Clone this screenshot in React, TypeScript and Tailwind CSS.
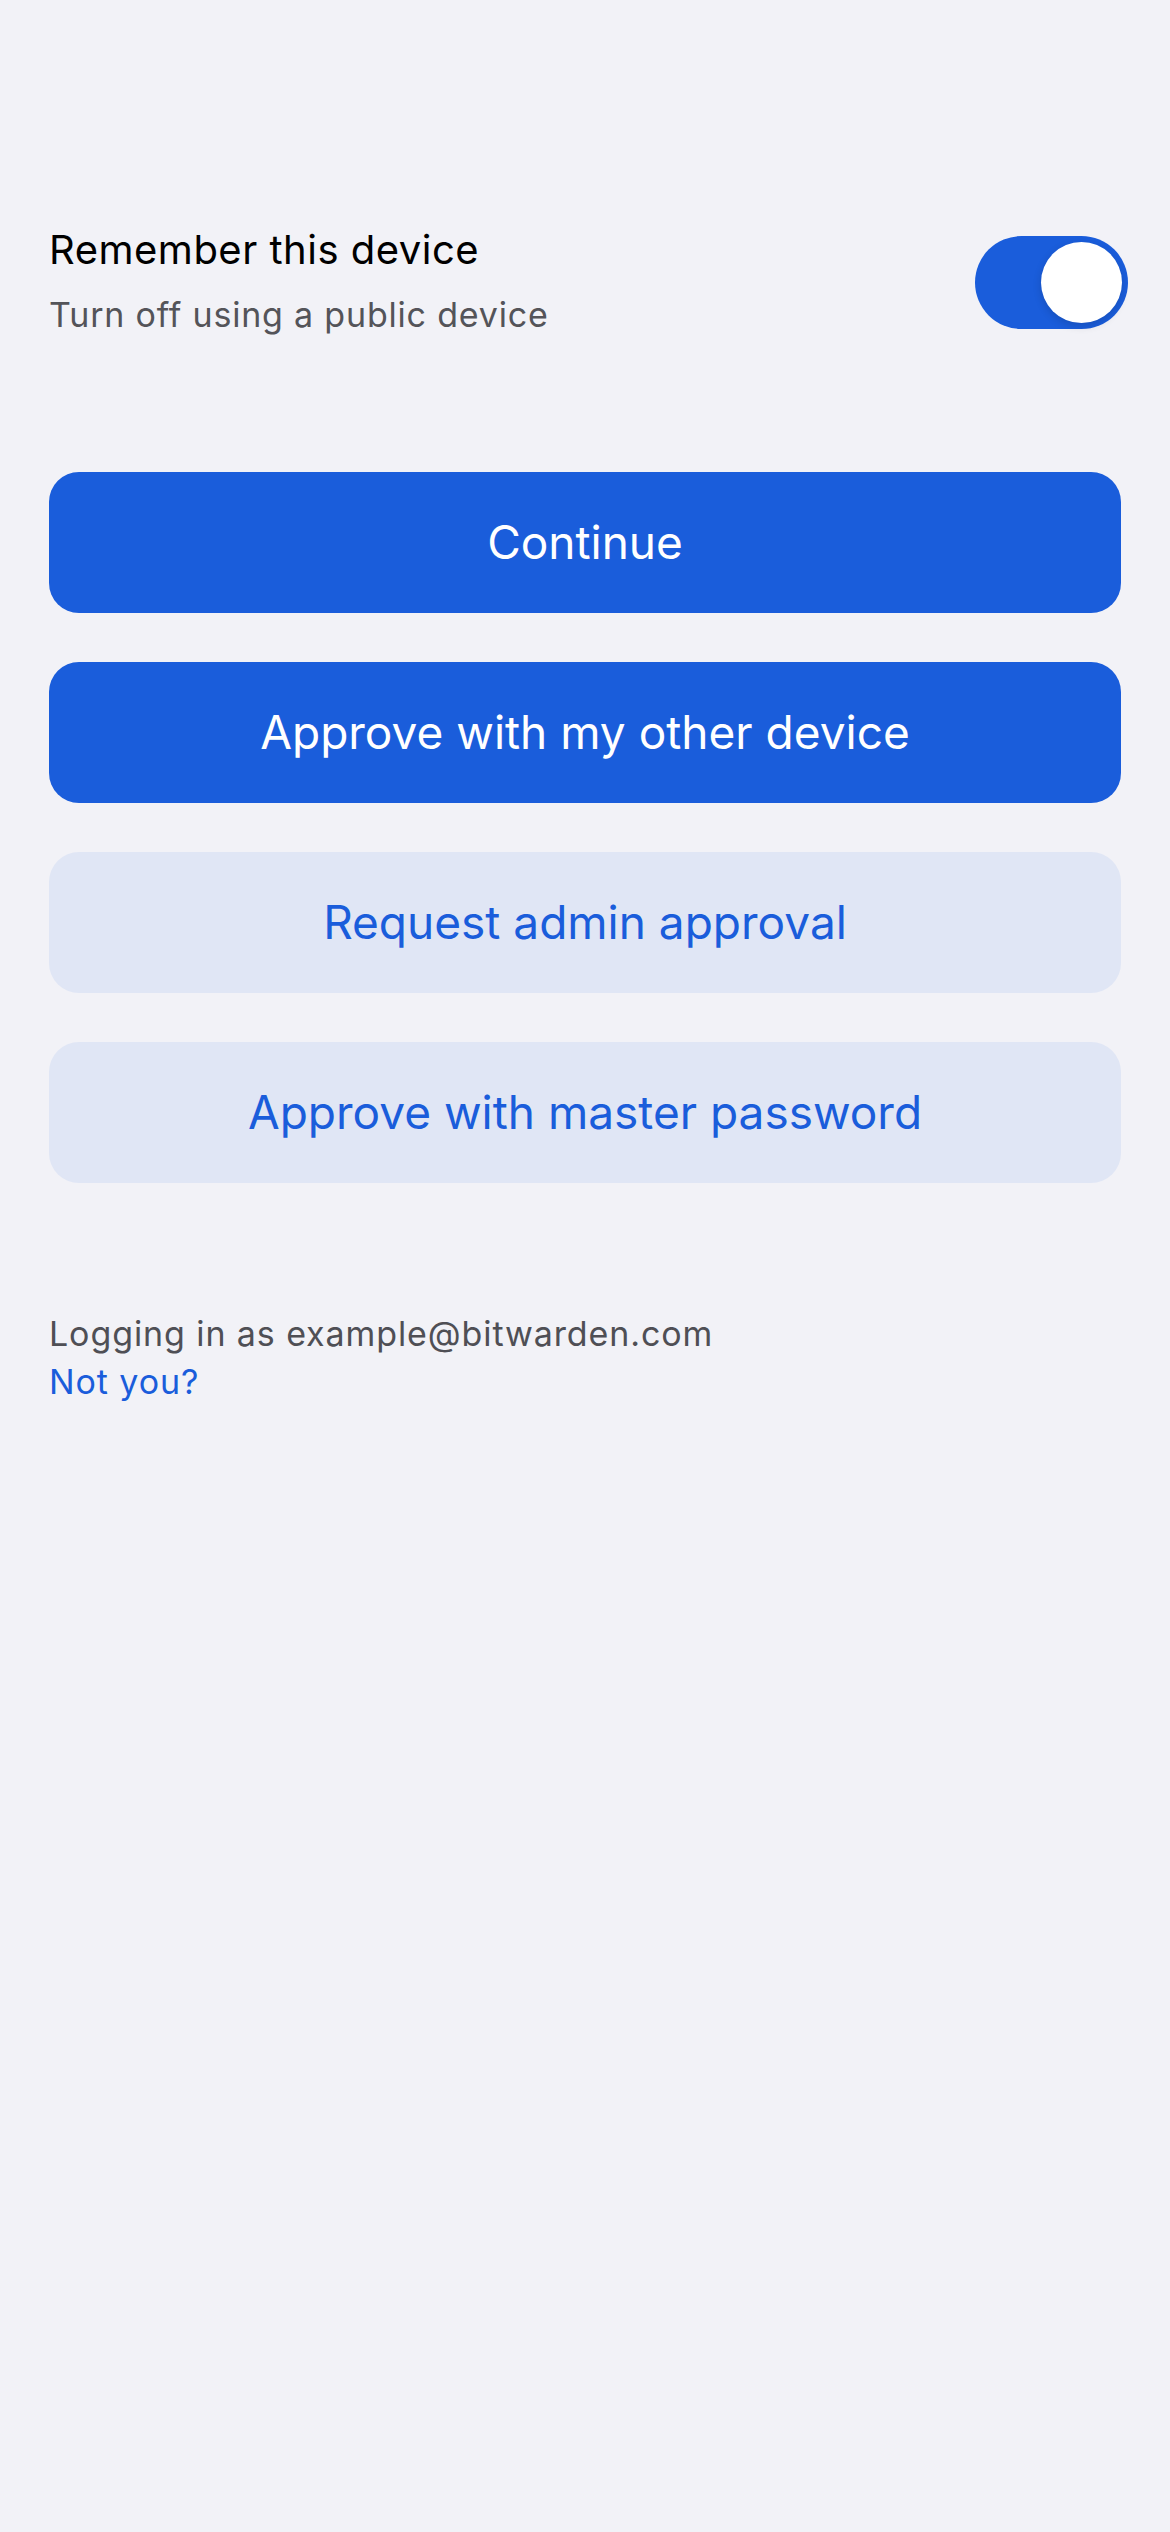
import React from "react";

export default function App() {
  const font = { fontFamily: "Inter, 'Noto Sans', 'Liberation Sans', sans-serif" };
  return (
    <div className="min-h-screen w-full bg-[#f2f2f7] px-[49px] pt-[225px]" style={font}>
      <div className="flex items-center justify-between mr-[-7px]">
        <div className="flex flex-col gap-[15px]">
          <div className="text-[40px] leading-[50px] tracking-[0.5px] text-black">Remember this device</div>
          <div className="text-[34px] leading-[50px] tracking-[0.8px] text-[#545459]">Turn off using a public device</div>
        </div>
        <button className="relative h-[93px] w-[153px] rounded-full bg-[#1a5ddb]">
          <span className="absolute right-[6px] top-[6px] h-[81px] w-[81px] rounded-full bg-white shadow-[0_3px_8px_rgba(0,0,0,0.15)]" />
        </button>
      </div>

      <div className="mt-[132px] flex flex-col gap-[49px]">
        <button className="flex h-[141px] w-full items-center justify-center rounded-[30px] bg-[#1a5ddb] text-[46px] text-white">
          Continue
        </button>
        <button className="flex h-[141px] w-full items-center justify-center rounded-[30px] bg-[#1a5ddb] text-[46px] text-white">
          Approve with my other device
        </button>
        <button className="flex h-[141px] w-full items-center justify-center rounded-[30px] bg-[#e0e6f5] text-[46px] text-[#1a5ddb]">
          Request admin approval
        </button>
        <button className="flex h-[141px] w-full items-center justify-center rounded-[30px] bg-[#e0e6f5] text-[46px] text-[#1a5ddb]">
          Approve with master password
        </button>
      </div>

      <div className="mt-[127px] flex flex-col">
        <div className="text-[34px] leading-[48px] tracking-[0.9px] text-[#4f4f55]">Logging in as example@bitwarden.com</div>
        <div className="text-[34px] leading-[48px] tracking-[0.9px] text-[#1a5ddb]">Not you?</div>
      </div>
    </div>
  );
}
